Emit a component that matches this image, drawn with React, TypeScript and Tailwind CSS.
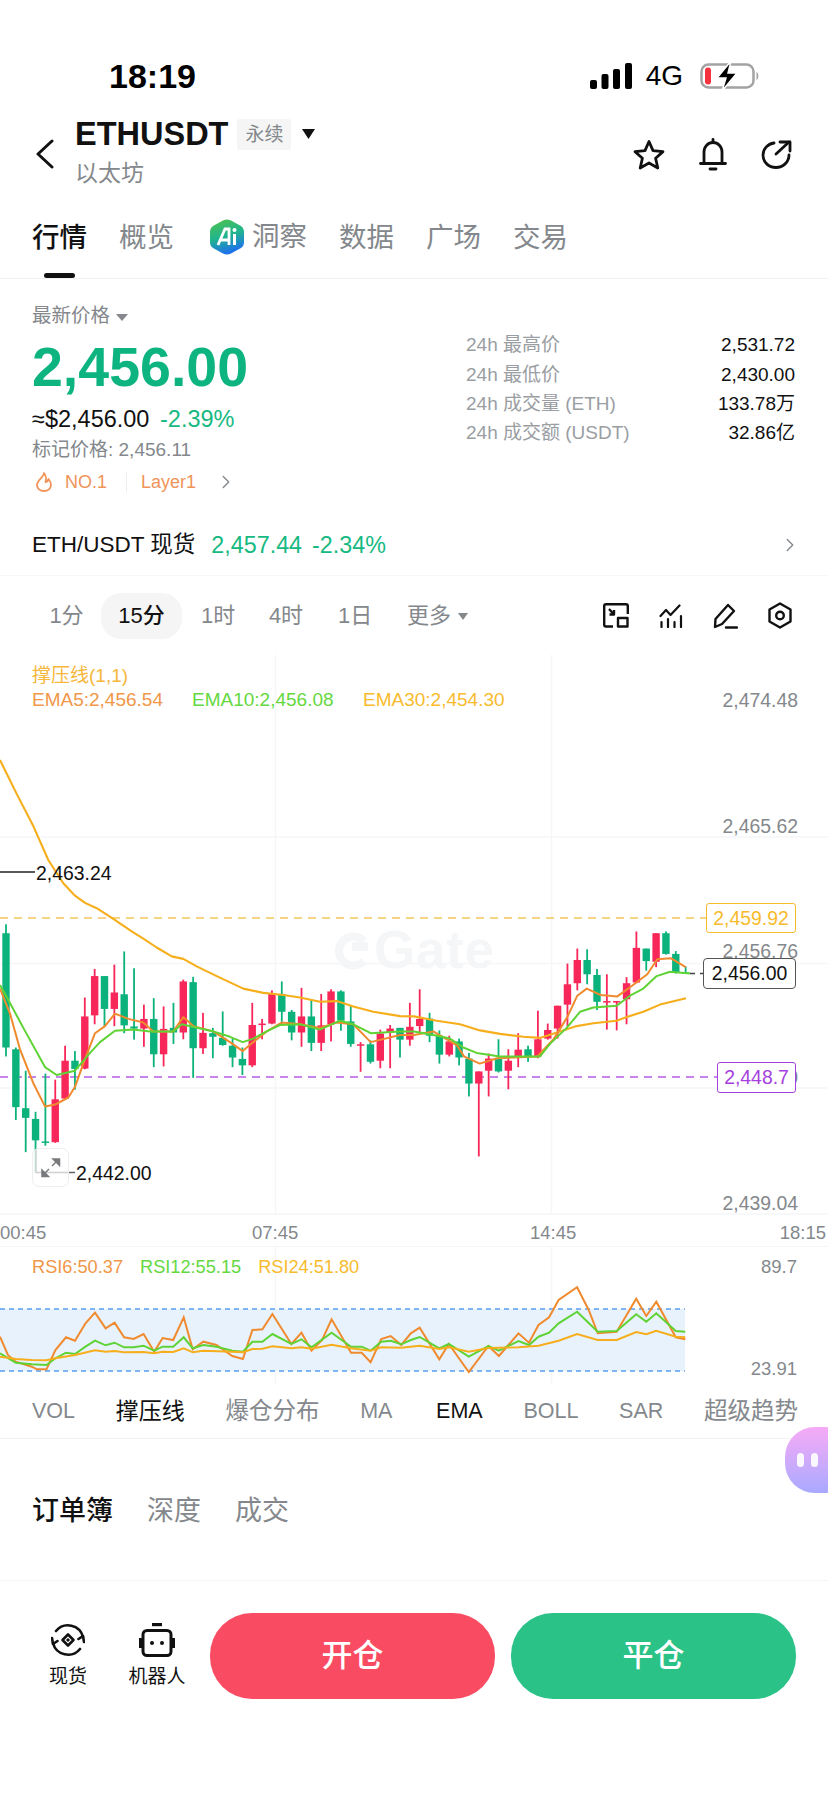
import React from 'react';
import { ChevronRight } from 'lucide-react';

const sans = "font-['Liberation_Sans','Noto_Sans_CJK_SC',sans-serif]";

// candle values are [wick top, body top, body bottom, wick bottom, colour], read off the chart
type Candle = [number, number, number, number, 'g' | 'r'];
const candles: Candle[] = [
    [740, 765, 1085, 1110, 'g'], [1085, 1090, 1252, 1288, 'g'], [1150, 1255, 1282, 1378, 'g'], [1265, 1285, 1345, 1435, 'g'],
    [1158, 1348, 1351, 1360, 'g'], [1175, 1230, 1350, 1352, 'r'], [1080, 1122, 1228, 1230, 'r'], [1095, 1122, 1145, 1203, 'g'],
    [945, 998, 1144, 1146, 'r'], [865, 885, 995, 1020, 'r'], [885, 885, 977, 1025, 'g'], [853, 931, 977, 1025, 'r'],
    [816, 936, 1023, 1045, 'g'], [863, 1026, 1032, 1063, 'g'], [965, 1005, 1032, 1083, 'r'], [947, 1005, 1104, 1140, 'g'],
    [970, 1033, 1104, 1138, 'r'], [960, 1030, 1043, 1075, 'g'], [895, 900, 1043, 1062, 'r'], [887, 902, 1087, 1170, 'g'],
    [988, 1044, 1087, 1103, 'r'], [1030, 1045, 1055, 1115, 'g'], [984, 1058, 1078, 1080, 'g'], [1060, 1080, 1113, 1140, 'g'],
    [1085, 1117, 1135, 1162, 'g'], [960, 1022, 1135, 1140, 'r'], [1005, 1018, 1021, 1062, 'r'], [925, 935, 1018, 1020, 'r'],
    [900, 935, 985, 1020, 'g'], [980, 985, 1043, 1065, 'g'], [918, 998, 1043, 1083, 'r'], [952, 998, 1072, 1095, 'g'],
    [935, 1023, 1072, 1095, 'r'], [922, 928, 1020, 1068, 'r'], [925, 928, 1010, 1038, 'g'], [968, 1012, 1075, 1083, 'g'],
    [1070, 1076, 1079, 1153, 'r'], [1065, 1076, 1125, 1130, 'g'], [1035, 1046, 1122, 1143, 'r'], [1022, 1032, 1043, 1143, 'r'],
    [1030, 1030, 1063, 1113, 'g'], [960, 1027, 1063, 1080, 'r'], [922, 1005, 1025, 1045, 'r'], [988, 1004, 1052, 1070, 'g'],
    [1037, 1052, 1105, 1130, 'g'], [1052, 1068, 1105, 1110, 'r'], [1060, 1068, 1113, 1135, 'g'], [1100, 1116, 1186, 1222, 'g'],
    [1152, 1152, 1186, 1390, 'r'], [1102, 1116, 1150, 1222, 'r'], [1062, 1114, 1152, 1155, 'g'], [1090, 1122, 1150, 1202, 'r'],
    [1045, 1091, 1113, 1140, 'r'], [1080, 1090, 1110, 1125, 'g'], [982, 1062, 1110, 1115, 'r'], [1018, 1036, 1060, 1063, 'r'],
    [968, 968, 1032, 1060, 'r'], [850, 908, 965, 1025, 'r'], [808, 840, 905, 925, 'r'], [810, 840, 880, 908, 'g'],
    [865, 882, 957, 980, 'g'], [880, 955, 958, 1035, 'r'], [955, 955, 958, 1037, 'r'], [888, 905, 950, 1020, 'r'],
    [760, 806, 903, 905, 'r'], [808, 808, 843, 870, 'g'], [765, 765, 845, 860, 'r'], [760, 765, 823, 825, 'g'],
    [815, 823, 875, 878, 'g'], [858, 875, 877, 878, 'g'],
];

const ema30 = [[0, 280], [50, 375], [100, 465], [145, 560], [190, 625], [225, 660], [255, 680], [290, 695], [340, 725], [395, 760], [430, 780], [470, 805], [515, 830], [550, 837], [590, 858], [650, 885], [730, 920], [790, 932], [850, 938], [900, 945], [960, 957], [1010, 955], [1060, 970], [1120, 985], [1200, 997], [1242, 998], [1310, 1010], [1380, 1020], [1440, 1037], [1500, 1047], [1570, 1055], [1620, 1058], [1680, 1040], [1730, 1025], [1780, 1017], [1850, 1010], [1880, 1000], [1930, 985], [1980, 965], [2058, 947]];
const ema5 = [[0, 920], [30, 990], [60, 1090], [100, 1185], [135, 1250], [165, 1245], [205, 1225], [225, 1195], [250, 1130], [285, 1045], [315, 1025], [345, 990], [385, 1005], [430, 1015], [460, 1040], [520, 1040], [550, 1000], [580, 1025], [640, 1040], [690, 1070], [728, 1095], [760, 1070], [800, 1040], [845, 1015], [900, 1020], [960, 1030], [1010, 1015], [1060, 1020], [1112, 1070], [1200, 1050], [1242, 1050], [1300, 1040], [1372, 1080], [1392, 1110], [1439, 1130], [1492, 1115], [1612, 1110], [1662, 1060], [1702, 1000], [1732, 940], [1760, 920], [1802, 938], [1852, 942], [1892, 915], [1942, 880], [1972, 838], [2012, 835], [2057, 860]];
const ema10 = [[0, 910], [30, 960], [70, 1030], [135, 1140], [170, 1162], [225, 1150], [270, 1100], [300, 1070], [345, 1038], [400, 1035], [450, 1040], [520, 1040], [545, 1020], [640, 1040], [690, 1055], [728, 1070], [760, 1060], [800, 1040], [840, 1022], [900, 1020], [960, 1035], [1020, 1010], [1060, 1020], [1112, 1045], [1200, 1040], [1242, 1040], [1300, 1050], [1350, 1060], [1390, 1085], [1430, 1100], [1500, 1110], [1620, 1110], [1650, 1075], [1700, 1030], [1740, 985], [1780, 973], [1850, 968], [1890, 940], [1930, 920], [1970, 885], [2010, 873], [2070, 878]];

const rsi6 = [[0, 320], [15, 375], [30, 395], [60, 410], [70, 418], [88, 418], [105, 360], [125, 322], [142, 332], [162, 280], [180, 248], [200, 295], [217, 278], [235, 322], [253, 327], [272, 312], [292, 365], [308, 324], [328, 330], [348, 262], [365, 358], [385, 335], [410, 345], [440, 378], [460, 387], [478, 300], [497, 298], [516, 252], [552, 342], [571, 308], [590, 362], [610, 330], [628, 268], [665, 368], [685, 368], [702, 397], [722, 327], [740, 318], [760, 345], [778, 310], [795, 293], [832, 388], [850, 342], [888, 426], [925, 348], [945, 378], [982, 310], [1002, 338], [1020, 285], [1040, 262], [1058, 210], [1093, 172], [1115, 240], [1132, 310], [1168, 305], [1205, 206], [1224, 258], [1243, 215], [1280, 322], [1298, 328]];
const rsi12 = [[0, 370], [30, 398], [60, 403], [88, 405], [105, 385], [125, 368], [142, 372], [162, 350], [180, 332], [200, 346], [217, 338], [235, 352], [253, 352], [272, 347], [292, 362], [308, 350], [328, 350], [348, 322], [365, 355], [385, 345], [410, 350], [440, 362], [460, 365], [478, 335], [497, 335], [516, 312], [552, 342], [571, 328], [590, 352], [628, 308], [665, 350], [685, 350], [702, 362], [722, 335], [740, 332], [760, 343], [778, 330], [795, 321], [832, 355], [850, 342], [888, 380], [925, 348], [945, 362], [982, 333], [1002, 345], [1020, 320], [1040, 308], [1058, 280], [1093, 245], [1132, 305], [1168, 303], [1205, 253], [1224, 275], [1243, 250], [1280, 303], [1298, 305]];
const rsi24 = [[0, 380], [30, 387], [60, 390], [88, 391], [105, 385], [142, 375], [180, 361], [200, 365], [217, 363], [235, 367], [272, 366], [292, 370], [308, 365], [328, 366], [348, 355], [365, 367], [385, 362], [440, 365], [460, 367], [478, 357], [497, 356], [516, 349], [552, 355], [571, 352], [590, 356], [628, 344], [665, 355], [702, 362], [722, 352], [760, 353], [795, 347], [832, 357], [850, 352], [888, 365], [925, 354], [982, 352], [1020, 347], [1058, 332], [1093, 312], [1132, 330], [1168, 330], [1205, 306], [1224, 313], [1243, 302], [1280, 320], [1298, 322]];

const chartY = (v: number) => 660 + v / 2.8;
const emaPath = (pts: number[][]) => pts.map(([x, y]) => `${(x / 3).toFixed(1)},${chartY(y).toFixed(1)}`).join(' ');
const rsiPath = (pts: number[][]) => pts.map(([x, y]) => `${(x / 1.894).toFixed(1)},${(y / 3).toFixed(1)}`).join(' ');

const stats = [
    ['24h 最高价', '2,531.72'],
    ['24h 最低价', '2,430.00'],
    ['24h 成交量 (ETH)', '133.78万'],
    ['24h 成交额 (USDT)', '32.86亿'],
];

const StatusBar = () => (
    <div className="h-[100px] pt-[52px] pl-[109px] pr-[68px] flex justify-between items-start text-black">
        <span className="h-[48px] leading-[48px] text-[34px] font-bold">18:19</span>
        <div className="flex items-center h-[48px]">
            <svg className="ml-[-2px]" width="42" height="26" viewBox="0 0 42 26" fill="#000">
                <rect x="0" y="17" width="7" height="9" rx="2" />
                <rect x="11.5" y="11" width="7" height="15" rx="2" />
                <rect x="23" y="6" width="7" height="20" rx="2" />
                <rect x="35" y="0" width="7" height="26" rx="2" />
            </svg>
            <span className="ml-[14px] text-[28px] leading-none">4G</span>
            <svg className="ml-[17px]" width="60" height="30" viewBox="0 0 60 30">
                <rect x="1.5" y="3.5" width="52" height="23" rx="7" fill="none" stroke="#a3a3a3" strokeWidth="2.5" />
                <rect x="5" y="6.5" width="6" height="17" rx="3" fill="#f5333f" />
                <path d="M56.5 11 C59 12 59 18 56.5 19 Z" fill="#a3a3a3" />
                <path d="M31 0 L17 17 H26 L22 30 L37 12 H28 Z" fill="#000" stroke="#fff" strokeWidth="1.5" />
            </svg>
        </div>
    </div>
);

const Header = () => (
    <div className="h-[108px] flex items-center pl-[35px] pr-[36px]">
        <svg width="19" height="30" viewBox="0 0 19 30" fill="none" stroke="#111" strokeWidth="3" strokeLinecap="round" strokeLinejoin="round">
            <path d="M17 2 L3 15 L17 28" />
        </svg>
        <div className="ml-[21px] flex flex-col mt-[-5px]">
            <div className="flex items-center h-[32px]">
                <span className="text-[32.5px] leading-none font-bold text-[#111]">ETHUSDT</span>
                <span className="ml-[9px] w-[54px] h-[31px] rounded-[3px] bg-[#f5f5f5] text-[19px] leading-[31px] text-center text-[#84888c]">永续</span>
                <svg className="ml-[11px] mb-[2px]" width="13" height="10" viewBox="0 0 13 10" fill="#111"><path d="M0 0 H13 L6.5 10 Z" /></svg>
            </div>
            <span className="mt-[10px] text-[23px] leading-[24px] text-[#84888c]">以太坊</span>
        </div>
        <div className="ml-auto flex items-center gap-[34px]">
            <svg width="32" height="31" viewBox="0 0 32 31" fill="none" stroke="#111" strokeWidth="2.8" strokeLinejoin="round">
                <path d="M16 2.5 L20 11.6 L30 12.6 L22.6 19.2 L24.8 29 L16 24 L7.2 29 L9.4 19.2 L2 12.6 L12 11.6 Z" />
            </svg>
            <svg width="28" height="33" viewBox="0 0 28 33" fill="none" stroke="#111" strokeWidth="2.8" strokeLinecap="round">
                <path d="M14 1.5 V4" />
                <path d="M5 25 V14 C5 8.5 9 4.5 14 4.5 C19 4.5 23 8.5 23 14 V25" />
                <path d="M1.5 25.5 H26.5" />
                <path d="M11 31 H17" />
            </svg>
            <svg width="31" height="29" viewBox="0 0 31 29" fill="none" stroke="#111" strokeWidth="2.8" strokeLinecap="round" strokeLinejoin="round">
                <path d="M13 3 C6.5 4 2 9 2 15 C2 22 7.5 27.5 15 27.5 C22 27.5 28 22 28 15" />
                <path d="M15 14 L28 2" />
                <path d="M19 2 H29 V11" />
            </svg>
        </div>
    </div>
);

const Tabs = () => (
    <div className="h-[71px] border-b border-[#f2f2f2] pl-[32px] flex gap-[32px] text-[27.5px] text-[#84888c]">
        <span className="relative h-[58px] leading-[60px] font-medium text-[#111]">
            行情
            <span className="absolute left-[12px] top-[65px] w-[31px] h-[5px] rounded-full bg-[#111]"></span>
        </span>
        <span className="h-[58px] leading-[60px] mr-[4px]">概览</span>
        <span className="h-[58px] leading-[60px] flex items-center gap-[8px]">
            <svg width="34" height="36" viewBox="0 0 34 36">
                <defs>
                    <linearGradient id="aiHex" x1="0" y1="0" x2="0.3" y2="1">
                        <stop offset="0" stopColor="#53c24a" />
                        <stop offset="0.55" stopColor="#20b58e" />
                        <stop offset="1" stopColor="#1e74e8" />
                    </linearGradient>
                </defs>
                <path d="M13 1.5 Q17 -0.5 21 1.5 L31 7 Q34 9 34 12 V24 Q34 27 31 29 L21 34.5 Q17 36.5 13 34.5 L3 29 Q0 27 0 24 V12 Q0 9 3 7 Z" fill="url(#aiHex)" />
                <path d="M8 26 L15 10 L19 10 L19 26 M11 21 H19" fill="none" stroke="#fff" strokeWidth="2.8" />
                <rect x="23" y="15" width="3" height="11" fill="#fff" />
                <circle cx="24.5" cy="11" r="2" fill="#fff" />
            </svg>
            <span>洞察</span>
        </span>
        <span className="h-[58px] leading-[60px]">数据</span>
        <span className="h-[58px] leading-[60px]">广场</span>
        <span className="h-[58px] leading-[60px]">交易</span>
    </div>
);

const PriceBlock = () => (
    <div className="h-[297px] border-b border-[#f7f7f7] pl-[32px] pr-[33px] flex flex-col">
        <div className="flex justify-between h-[226px]">
            <div className="flex flex-col pt-[24px]">
                <div className="h-[26px] flex items-center text-[19.5px] text-[#84888c]">
                    最新价格
                    <svg className="ml-[6px] mt-[2px]" width="12" height="7" viewBox="0 0 12 7" fill="#84888c"><path d="M0 0 H12 L6 7 Z" /></svg>
                </div>
                <div className="mt-[8px] h-[60px] leading-[60px] text-[55.5px] font-bold text-[#0db47f]">2,456.00</div>
                <div className="mt-[7px] h-[30px] leading-[30px] text-[23.5px] text-[#111] whitespace-nowrap">
                    ≈$2,456.00 <span className="ml-[4px] text-[#16b981]">-2.39%</span>
                </div>
                <div className="mt-[3px] h-[26px] leading-[26px] text-[19px] text-[#84888c]">标记价格: 2,456.11</div>
                <div className="mt-[7px] h-[24px] flex items-center text-[18px] text-[#f0945a]">
                    <svg className="ml-[3px]" width="18" height="20" viewBox="0 0 18 20" fill="none" stroke="#f0945a" strokeWidth="1.8" strokeLinejoin="round">
                        <path d="M9 1 C9 5 2 8 2 13 C2 16.5 5 19 9 19 C13 19 16 16.5 16 13 C16 10 14.5 8.5 13.5 7 C13 9 12 10 10.5 10 C11.5 7 11 3.5 9 1 Z" />
                    </svg>
                    <span className="ml-[12px]">NO.1</span>
                    <span className="ml-[19px] w-[1px] h-[20px] bg-[#eeeeee]"></span>
                    <span className="ml-[14px]">Layer1</span>
                    <ChevronRight className="ml-[19px] text-[#84888c]" size={22} strokeWidth={1.5} />
                </div>
            </div>
            <div className="w-[329px] pt-[52px] flex flex-col">
                {stats.map(([label, value]) => (
                    <div key={label} className="h-[29.3px] flex justify-between items-center text-[19px]">
                        <span className="text-[#9a9ea3]">{label}</span>
                        <span className="text-[#111]">{value}</span>
                    </div>
                ))}
            </div>
        </div>
        <div className="mt-[20px] h-[40px] flex items-center text-[23.3px] whitespace-nowrap">
            <span className="text-[#111] text-[22.5px]">ETH/USDT 现货</span>
            <span className="ml-[16px] text-[#16b981]">2,457.44</span>
            <span className="ml-[10px] text-[#16b981]">-2.34%</span>
            <ChevronRight className="ml-auto mr-[-6px] text-[#84888c]" size={22} strokeWidth={1.5} />
        </div>
    </div>
);

const Periods = () => (
    <div className="h-[79px] pl-[32px] pr-[36px] flex items-center text-[22px] text-[#84888c] whitespace-nowrap">
        <span className="w-[69px] text-center">1分</span>
        <span className="w-[81px] h-[46px] leading-[46px] rounded-[20px] bg-[#f5f5f5] text-center font-medium text-[#111]">15分</span>
        <span className="ml-[19px] w-[34px] text-center">1时</span>
        <span className="ml-[33px] w-[36px] text-center">4时</span>
        <span className="ml-[34px] w-[33px] text-center">1日</span>
        <span className="ml-[36px]">更多</span>
        <svg className="ml-[7px] mt-[2px]" width="10" height="7" viewBox="0 0 10 7" fill="#84888c"><path d="M0 0 H10 L5 7 Z" /></svg>
        <div className="ml-auto flex items-center gap-[30px]">
            <svg width="26" height="25" viewBox="0 0 26 25" fill="none" stroke="#111" strokeWidth="2.4" strokeLinejoin="round">
                <path d="M10 23.5 H3 Q1.2 23.5 1.2 21.5 V3 Q1.2 1.2 3 1.2 H23 Q24.8 1.2 24.8 3 V11" />
                <rect x="15" y="15" width="9.5" height="8.5" />
                <path d="M6 6 L11 11.5 M11 7 V11.5 H6.5" />
            </svg>
            <svg width="24" height="24" viewBox="0 0 24 24" fill="none" stroke="#111" strokeWidth="2.2" strokeLinecap="round" strokeLinejoin="round">
                <path d="M1.5 12 L7 6 L11.5 11 L20.5 1.5" />
                <path d="M2.5 23 V18 M9 23 V15 M15.5 23 V18 M22 23 V12" />
            </svg>
            <svg width="25" height="26" viewBox="0 0 25 26" fill="none" stroke="#111" strokeWidth="2.4" strokeLinecap="round" strokeLinejoin="round">
                <path d="M15 2 L21 8 L9 21 L2 24 L2.5 16 Z" />
                <path d="M13 24.5 H24" />
            </svg>
            <svg width="24" height="27" viewBox="0 0 24 27" fill="none" stroke="#111" strokeWidth="2.4" strokeLinejoin="round">
                <path d="M12 1.5 L22.5 7.5 V19.5 L12 25.5 L1.5 19.5 V7.5 Z" />
                <circle cx="12" cy="13.5" r="3.8" />
            </svg>
        </div>
    </div>
);

const axisLabels = [
    ['2,474.48', 700],
    ['2,465.62', 826],
    ['2,456.76', 951],
    ['2,447.90', 1077],
    ['2,439.04', 1203],
] as const;

// y is given in page pixels: the chart starts at 655
const at = (y: number) => ({ top: y - 655 });

const KlineChart = () => (
    <div className="relative h-[592px] border-b border-[#f5f5f5]">
        <svg className="absolute inset-0" width="828" height="592" viewBox="0 655 828 592">
            {[837, 963.5, 1088, 1214].map(y => <line key={y} x1="0" x2="828" y1={y} y2={y} stroke="#f5f6f7" strokeWidth="1.5" />)}
            {[275.5, 551.5].map(x => <line key={x} x1={x} x2={x} y1="655" y2="1214" stroke="#f5f6f7" strokeWidth="1.5" />)}
            <g fill="#f5f6f7">
                <path d="M364 941 A14.5 14.5 0 1 0 364 961" fill="none" stroke="#f5f6f7" strokeWidth="8" />
                <path d="M352 942 H368 V951 H352 Z" />
                <text x="374" y="968" fontFamily="Liberation Sans" fontWeight="700" fontSize="53" textLength="120">Gate</text>
            </g>
            <line x1="0" x2="706" y1="918" y2="918" stroke="#f3c65f" strokeWidth="1.5" strokeDasharray="8 6" />
            <line x1="0" x2="717" y1="1077" y2="1077" stroke="#b65be8" strokeWidth="1.5" strokeDasharray="8 6" />
            <line x1="690" x2="703" y1="973.5" y2="973.5" stroke="#444" strokeWidth="1.5" strokeDasharray="5 5" />
            <line x1="0" x2="35" y1="872" y2="872" stroke="#222" strokeWidth="1.5" />
            {candles.map(([wt, bt, bb, wb, c], i) => {
                const x = 6 + i * 9.85;
                const color = c === 'g' ? '#0cb27b' : '#f8275a';
                return (
                    <g key={i} fill={color}>
                        <rect x={x - 0.9} y={chartY(wt)} width="1.8" height={chartY(wb) - chartY(wt)} />
                        <rect x={x - 3.7} y={chartY(bt)} width="7.4" height={Math.max(chartY(bb) - chartY(bt), 1.5)} />
                    </g>
                );
            })}
            <polyline points={emaPath(ema30)} fill="none" stroke="#f6ae1c" strokeWidth="2.1" strokeLinejoin="round" />
            <polyline points={emaPath(ema5)} fill="none" stroke="#f08a2e" strokeWidth="2" strokeLinejoin="round" />
            <polyline points={emaPath(ema10)} fill="none" stroke="#5fd335" strokeWidth="2" strokeLinejoin="round" />
            <path d="M36 1150 V1172.5 H75" fill="none" stroke="#666" strokeWidth="1.4" />
        </svg>

        <span className="absolute left-[32px] top-[9px] text-[19px] leading-[24px] text-[#f6b73c]">撑压线(1,1)</span>
        <div className="absolute left-[32px] top-[33px] h-[24px] text-[19px] leading-[24px] whitespace-nowrap">
            <span className="text-[#f0974a]">EMA5:2,456.54</span>
            <span className="absolute left-[160px] text-[#65d83f]">EMA10:2,456.08</span>
            <span className="absolute left-[331px] text-[#f8bb2e]">EMA30:2,454.30</span>
        </div>

        {axisLabels.map(([label, y]) => (
            <span key={label} className="absolute right-[30px] text-[19.4px] leading-[24px] text-[#84888c]" style={at(y - 12)}>{label}</span>
        ))}

        <span className="absolute left-[36px] text-[19.4px] leading-[24px] text-[#111]" style={at(861)}>2,463.24</span>
        <span className="absolute left-[76px] text-[19.4px] leading-[24px] text-[#111]" style={at(1161)}>2,442.00</span>

        <div className="absolute left-[32px] w-[37px] h-[39px] rounded-[7px] border border-[#eeeeee] bg-white/70 flex items-center justify-center" style={at(1148)}>
            <svg width="21" height="21" viewBox="0 0 21 21" fill="#77797c" stroke="#77797c" strokeWidth="1.5">
                <path d="M12 9 L18 3" />
                <path d="M13 2 H19.5 V8.5 Z" />
                <path d="M9 12 L3 18" />
                <path d="M8.5 19.5 H2 V13 Z" />
            </svg>
        </div>

        <span className="absolute left-[706px] w-[90px] h-[30px] rounded-[3px] border border-[#f8bb2e] bg-white text-center text-[19.4px] leading-[28px] text-[#f8bb2e]" style={at(903)}>2,459.92</span>
        <span className="absolute left-[703px] w-[93px] h-[31px] rounded-[4px] border border-[#555] bg-white text-center text-[19.4px] leading-[29px] text-[#111]" style={at(958)}>2,456.00</span>
        <span className="absolute left-[717px] w-[79px] h-[31px] rounded-[3px] border border-[#a63fe0] bg-white text-center text-[19.4px] leading-[29px] text-[#a63fe0]" style={at(1062)}>2,448.7</span>

        <span className="absolute left-[0px] text-[18.5px] leading-[24px] text-[#84888c]" style={at(1221)}>00:45</span>
        <span className="absolute left-[252px] text-[18.5px] leading-[24px] text-[#84888c]" style={at(1221)}>07:45</span>
        <span className="absolute left-[530px] text-[18.5px] leading-[24px] text-[#84888c]" style={at(1221)}>14:45</span>
        <span className="absolute right-[2px] text-[18.5px] leading-[24px] text-[#84888c]" style={at(1221)}>18:15</span>
    </div>
);

const RsiChart = () => (
    <div className="relative h-[137px]">
        {/* rsi points are measured from y=1230, this block starts at 1247 */}
        <svg className="absolute inset-0" width="828" height="137" viewBox="0 17 828 137">
            {[275.5, 551.5].map(x => <line key={x} x1={x} x2={x} y1="17" y2="154" stroke="#f5f6f7" strokeWidth="1.5" />)}
            <rect x="0" y="79" width="685" height="62" fill="#e8f2fd" />
            <line x1="0" x2="685" y1="79" y2="79" stroke="#7fb5f2" strokeWidth="2" strokeDasharray="5 4" />
            <line x1="0" x2="685" y1="141" y2="141" stroke="#7fb5f2" strokeWidth="2" strokeDasharray="5 4" />
            <polyline points={rsiPath(rsi6)} fill="none" stroke="#f08a2e" strokeWidth="2" />
            <polyline points={rsiPath(rsi12)} fill="none" stroke="#5fd335" strokeWidth="2" />
            <polyline points={rsiPath(rsi24)} fill="none" stroke="#f6ae1c" strokeWidth="2" />
        </svg>
        <div className="absolute left-[32px] top-[8px] flex gap-[17px] text-[18.2px] leading-[24px]">
            <span className="text-[#f0974a]">RSI6:50.37</span>
            <span className="text-[#65d83f]">RSI12:55.15</span>
            <span className="text-[#f8bb2e]">RSI24:51.80</span>
        </div>
        <span className="absolute right-[31px] top-[8px] text-[18.5px] leading-[24px] text-[#84888c]">89.7</span>
        <span className="absolute right-[31px] top-[110px] text-[18.5px] leading-[24px] text-[#84888c]">23.91</span>
    </div>
);

const IndicatorTabs = () => (
    <div className="h-[55px] border-b border-[#f2f2f2] flex items-center pl-[32px] pr-[30px] justify-between text-[21.5px] leading-[30px] text-[#84888c]">
        <span>VOL</span>
        <span className="text-[23px] text-[#111]">撑压线</span>
        <span className="text-[23.5px]">爆仓分布</span>
        <span className="mr-[3px]">MA</span>
        <span className="text-[#111]">EMA</span>
        <span>BOLL</span>
        <span>SAR</span>
        <span className="text-[23.5px]">超级趋势</span>
    </div>
);

const OrderTabs = () => (
    <div className="h-[142px] border-b border-[#f5f5f5] pl-[32px] pt-[4px] flex items-center gap-[34px] text-[27px] text-[#84888c]">
        <span className="font-medium text-[#111]">订单簿</span>
        <span>深度</span>
        <span>成交</span>
    </div>
);

const BottomBar = () => (
    <div className="pt-[32px] pl-[49px] pr-[32px] flex items-start">
        <div className="w-[38px] flex flex-col items-center pt-[10px]">
            <svg width="34" height="34" viewBox="0 0 34 34" fill="none" stroke="#111" strokeWidth="2.6" strokeLinecap="round" strokeLinejoin="round">
                <path d="M5 8 A15.5 15.5 0 0 1 32 14" />
                <path d="M29 26 A15.5 15.5 0 0 1 2 20" />
                <path d="M1 15 L2 21 L6.5 18" />
                <path d="M33 19 L32 13 L27.5 16" />
                <path d="M17 11.5 L22.5 17 L17 22.5 L11.5 17 Z" />
                <rect x="15.5" y="15.5" width="3" height="3" fill="#111" transform="rotate(45 17 17)" stroke="none" />
            </svg>
            <span className="mt-[8px] text-[19px] leading-[24px] whitespace-nowrap text-[#111]">现货</span>
        </div>
        <div className="ml-[41px] w-[58px] flex flex-col items-center pt-[10px]">
            <svg width="36" height="34" viewBox="0 0 36 34" fill="none" stroke="#111" strokeWidth="3" strokeLinejoin="round">
                <rect x="4" y="7.5" width="28" height="25" rx="4" />
                <path d="M13 1.5 H23" strokeWidth="3.4" />
                <path d="M1.5 15 V25 M34.5 15 V25" strokeWidth="3" />
                <circle cx="13" cy="20" r="2" fill="#111" stroke="none" />
                <circle cx="23" cy="20" r="2" fill="#111" stroke="none" />
            </svg>
            <span className="mt-[8px] text-[19px] leading-[24px] whitespace-nowrap text-[#111]">机器人</span>
        </div>
        <div className="ml-[24px] flex-1 flex gap-[16px]">
            <button className="flex-1 h-[86px] rounded-[42px] bg-[#f94c63] text-[31px] font-medium text-white">开仓</button>
            <button className="flex-1 h-[86px] rounded-[42px] bg-[#2bc287] text-[31px] font-medium text-white">平仓</button>
        </div>
    </div>
);

const App: React.FC = () => {
    return (
        <div className={`relative w-[828px] h-[1798px] overflow-hidden bg-white ${sans}`}>
            <StatusBar />
            <Header />
            <Tabs />
            <PriceBlock />
            <Periods />
            <KlineChart />
            <RsiChart />
            <IndicatorTabs />
            <OrderTabs />
            <BottomBar />
            <div className="absolute left-[785px] top-[1427px] w-[60px] h-[66px] rounded-l-[30px] rounded-r-[20px] bg-gradient-to-b from-[#f6aaf6] to-[#a8a9ff]">
                <div className="flex gap-[7px] pl-[12px] pt-[26px]">
                    <span className="w-[7px] h-[14px] rounded-full bg-white/90"></span>
                    <span className="w-[7px] h-[14px] rounded-full bg-white/90"></span>
                </div>
            </div>
        </div>
    );
};

export default App;
